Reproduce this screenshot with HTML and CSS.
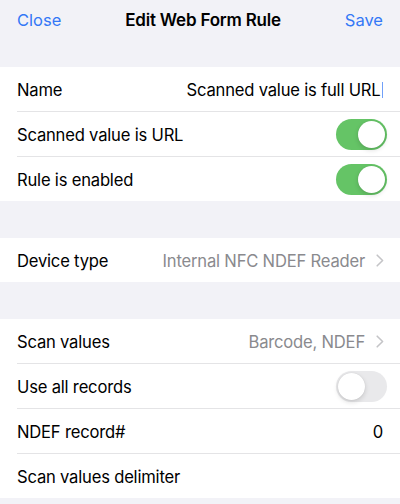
FILE: index.html
```html
<!DOCTYPE html>
<html>
<head>
<meta charset="utf-8">
<link rel="stylesheet" href="styles.css">
</head>
<body>
<div class="screen">
  <header class="nav">
    <span class="nav-btn">Close</span>
    <span class="nav-title">Edit Web Form Rule</span>
    <span class="nav-btn">Save</span>
  </header>

  <section class="group">
    <div class="row">
      <span class="label">Name</span>
      <span class="value dark">Scanned value is full URL<span class="cursor"></span></span>
    </div>
    <div class="row">
      <span class="label">Scanned value is URL</span>
      <span class="toggle on"><span class="knob"></span></span>
    </div>
    <div class="row">
      <span class="label">Rule is enabled</span>
      <span class="toggle on"><span class="knob"></span></span>
    </div>
  </section>

  <div class="gap"></div>

  <section class="group">
    <div class="row">
      <span class="label">Device type</span>
      <span class="value">Internal NFC NDEF Reader<svg class="chev" viewBox="0 0 8 13" width="8" height="13"><path d="M1.2 1.2 L6.6 6.5 L1.2 11.8" fill="none" stroke="#c4c4c7" stroke-width="1.6" stroke-linecap="round" stroke-linejoin="round"/></svg></span>
    </div>
  </section>

  <div class="gap"></div>

  <section class="group">
    <div class="row">
      <span class="label">Scan values</span>
      <span class="value">Barcode, NDEF<svg class="chev" viewBox="0 0 8 13" width="8" height="13"><path d="M1.2 1.2 L6.6 6.5 L1.2 11.8" fill="none" stroke="#c4c4c7" stroke-width="1.6" stroke-linecap="round" stroke-linejoin="round"/></svg></span>
    </div>
    <div class="row">
      <span class="label">Use all records</span>
      <span class="toggle"><span class="knob"></span></span>
    </div>
    <div class="row">
      <span class="label">NDEF record#</span>
      <span class="value dark">0</span>
    </div>
    <div class="row">
      <span class="label">Scan values delimiter</span>
    </div>
  </section>
</div>
</body>
</html>
```

FILE: styles.css
```css
html, body {
  margin: 0;
  padding: 0;
  background: #f2f2f7;
}
body {
  font-family: "Inter", "Liberation Sans", sans-serif;
  color: #000;
  -webkit-font-smoothing: antialiased;
}
.screen {
  width: 400px;
  height: 504px;
  overflow: hidden;
  background: #f2f2f7;
}
.nav {
  height: 67px;
  box-sizing: border-box;
  padding: 9px 17px 0 17px;
  display: flex;
  justify-content: space-between;
  align-items: flex-start;
  line-height: 22px;
  font-size: 16.5px;
}
.nav-btn {
  color: #3478f6;
}
.nav-title {
  font-size: 17px;
  font-weight: 600;
  letter-spacing: -0.2px;
}
.group {
  background: #fff;
}
.row {
  height: 44px;
  box-sizing: border-box;
  padding-top: 1px;
  margin-left: 17px;
  padding-right: 14px;
  display: flex;
  align-items: center;
  justify-content: space-between;
  font-size: 16.6px;
  letter-spacing: -0.2px;
}
.row + .row {
  border-top: 1px solid #e4e4e6;
  height: 45px;
}
.group:last-child .row {
  height: 45px;
}
.group:last-child .row:first-child {
  height: 44px;
}
.label {
  color: #000;
}
.value {
  color: #8a8a8e;
  display: flex;
  align-items: center;
}
.value.dark {
  color: #000;
  padding-right: 3px;
}
.chev {
  margin-left: 11px;
  margin-right: 2px;
}
.cursor {
  display: inline-block;
  width: 1.5px;
  height: 16px;
  background: #3478f6;
  margin-left: 1px;
  opacity: 0.7;
}
.toggle {
  width: 51px;
  height: 31px;
  border-radius: 16px;
  background: #e9e9eb;
  position: relative;
  margin-right: -1px;
}
.toggle.on {
  background: #65c466;
}
.knob {
  position: absolute;
  top: 2px;
  left: 2px;
  width: 27px;
  height: 27px;
  border-radius: 50%;
  background: #fff;
  box-shadow: 0 2px 5px rgba(0,0,0,0.15), 0 0 1px rgba(0,0,0,0.12);
}
.toggle.on .knob {
  left: 22px;
}
.gap {
  height: 37px;
}
```
